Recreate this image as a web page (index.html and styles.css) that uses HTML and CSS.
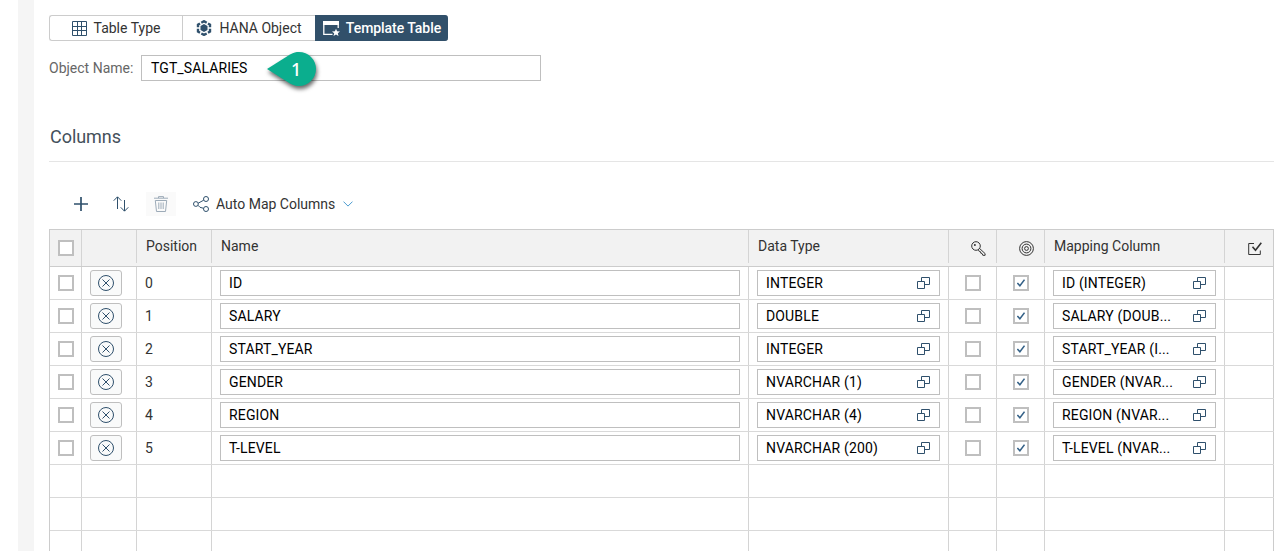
FILE: index.html
```html
<!DOCTYPE html>
<html lang="en">
<head>
<meta charset="utf-8">
<title>Template Table</title>
<link rel="stylesheet" href="styles.css">
</head>
<body>
<svg class="sprite" aria-hidden="true">
  <symbol id="i-grid" viewBox="0 0 15 15"><path d="M.5.5h14v14H.5zM5.500 .5v14M9.500 .5v14M.5 5.500h14M.5 9.500h14"/></symbol>
  <symbol id="i-hana" viewBox="0 0 16 16"><path class="solid" d="M8 4l3.500 2v4L8 12 4.500 10V6z"/><path stroke-width="2.400" d="M5.300 2.700L8 1.200l2.700 1.500M12 3.500l2 1.200v2.500M14 8.800v2.700l-2 1.200M10.700 13.500L8 14.900l-2.700-1.400M4 12.700l-2-1.200V8.800M2 7.200V4.700l2-1.200"/></symbol>
  <symbol id="i-template" viewBox="0 0 17 15"><path d="M9.500 13.300H.8V1h14.400v6"/><path class="solid" d="M0 0h16v4H0zM13 7.800l1.100 2.500 2.900.2-2.200 1.700.7 2.800-2.500-1.500-2.500 1.500.7-2.800L9 10.500l2.900-.2z"/></symbol>
  <symbol id="i-plus" viewBox="0 0 14 14"><path stroke-width="1.700" d="M7 0v14M0 7h14"/></symbol>
  <symbol id="i-sort" viewBox="0 0 16 16"><path d="M4.500 13V1M.7 4.700L4.500.8l3.800 3.900M11.500 4v11M7.700 11.300l3.800 3.900 3.800-3.900"/></symbol>
  <symbol id="i-trash" viewBox="0 0 14 16"><path d="M0 2.200h14M4.500 2V.6h5V2M1.300 4.500h11.400L11.500 15.500h-9zM4.800 6.500v6.500M7 6.500v6.500M9.200 6.500v6.500"/></symbol>
  <symbol id="i-share" viewBox="0 0 16 16"><circle cx="2.900" cy="8" r="2.400"/><circle cx="13" cy="3" r="2.500"/><circle cx="13" cy="13" r="2.500"/><path d="M5.200 7.200l5.500-3M5 9.300l2 2 3.500 1"/></symbol>
  <symbol id="i-chevron" viewBox="0 0 10 6"><path d="M.5.600L5 5.100 9.500.600"/></symbol>
  <symbol id="i-decline" viewBox="0 0 16 16"><circle cx="8" cy="8" r="7.500"/><path d="M4.500 4.500l7 7M11.500 4.500l-7 7"/></symbol>
  <symbol id="i-value" viewBox="0 0 13 12"><path d="M.5 4.500h7v7h-7zM4.500 4.500v-4h8v7h-5"/></symbol>
  <symbol id="i-check" viewBox="0 0 8 8"><path stroke-width="1.500" d="M.4 4l2.500 2.800L7.500.7"/></symbol>
  <symbol id="i-key" viewBox="0 0 15 15"><circle cx="5" cy="5" r="4.300"/><circle class="solid" cx="3.900" cy="3.900" r="1"/><path d="M8.500 7.400l5.600 5.200v1.700h-2.300L11 12.400l-1.200-.2-.3-1.500-1.200-.2-1-1.800"/></symbol>
  <symbol id="i-target" viewBox="0 0 15 15"><circle cx="7.500" cy="7.500" r="6.900"/><circle cx="7.500" cy="7.500" r="4.400"/><circle cx="7.500" cy="7.500" r="1.900"/></symbol>
  <symbol id="i-accept" viewBox="0 0 14 13"><path d="M6 1.500H.7v11h11.600V8.500"/><path stroke-width="1.600" d="M4.500 4.700l3 3.500L13.300.8"/></symbol>
</svg>

<div class="app">
  <div class="gutter"></div>
  <main class="panel">
    <div class="segments">
      <button class="segment"><svg class="icon s15"><use href="#i-grid"/></svg><span>Table Type</span></button>
      <button class="segment"><svg class="icon s16"><use href="#i-hana"/></svg><span>HANA Object</span></button>
      <button class="segment selected"><svg class="icon template-icon"><use href="#i-template"/></svg><span>Template Table</span></button>
    </div>

    <div class="object-row">
      <label class="object-label">Object Name:</label>
      <div class="object-input"><span>TGT_SALARIES</span>
        <div class="callout">
          <svg class="callout-shape" viewBox="0 0 49 34"><path d="M0 17L23 2.500C27 .5 29 0 32 0a17 17 0 0 1 0 34c-3 0-5-.5-9-2.500z"/></svg>
          <span class="callout-number">1</span>
        </div>
      </div>
    </div>

    <h2 class="section-title">Columns</h2>

    <div class="toolbar">
      <button class="tool"><svg class="icon s14"><use href="#i-plus"/></svg></button>
      <button class="tool"><svg class="icon s16"><use href="#i-sort"/></svg></button>
      <button class="tool disabled"><svg class="icon trash-icon"><use href="#i-trash"/></svg></button>
      <button class="automap"><svg class="icon s16"><use href="#i-share"/></svg><span>Auto Map Columns</span><svg class="icon chevron"><use href="#i-chevron"/></svg></button>
    </div>

    <div class="grid" id="grid">
      <div class="row header">
        <div class="cell"><span class="checkbox"></span></div>
        <div class="cell"></div>
        <div class="cell"><span>Position</span></div>
        <div class="cell"><span>Name</span></div>
        <div class="cell"><span>Data Type</span></div>
        <div class="cell end"><svg class="icon s15"><use href="#i-key"/></svg></div>
        <div class="cell end"><svg class="icon s15"><use href="#i-target"/></svg></div>
        <div class="cell"><span>Mapping Column</span></div>
        <div class="cell end"><svg class="icon accept-icon"><use href="#i-accept"/></svg></div>
      </div>
    </div>
  </main>
</div>
<script src="grid.js"></script>
</body>
</html>
```

FILE: styles.css
```css
* { box-sizing: border-box; }
body {
  margin: 0;
  height: 551px;
  overflow: hidden;
  background: #fff;
  color: #333;
  font: 14px/16px Roboto, "Noto Sans", sans-serif;
  letter-spacing: 0;
}
button { font: inherit; letter-spacing: inherit; color: inherit; margin: 0; padding: 0; }
.sprite { position: absolute; width: 0; height: 0; }
.icon { display: block; flex: none; fill: none; stroke: currentColor; color: #2f506c; stroke-width: 1; overflow: visible; }
.solid { fill: currentColor; stroke: none; }
.s14 { width: 14px; height: 14px; }
.s15 { width: 15px; height: 15px; }
.s16 { width: 16px; height: 16px; }

.app { display: flex; height: 551px; padding-left: 18px; }
.gutter { width: 16px; flex: none; background: #f5f5f5; }
.panel { width: 1240px; padding: 15px 0 0 15px; }

.segments { display: flex; width: 399px; height: 26px; }
.segment {
  display: flex; align-items: center; justify-content: center;
  width: 133px; height: 26px; gap: 7px;
  border: 1px solid #ccc; border-right: 0; background: #fff;
  white-space: nowrap;
}
.segment:first-child { border-radius: 3px 0 0 3px; }
.segment.selected { gap: 6px; background: #31506a; border-color: #31506a; color: #fff; font-weight: 500; letter-spacing: -.05px; border-radius: 0 3px 3px 0; }
.segment.selected .icon { color: #fff; }
.template-icon { width: 17px; height: 15px; stroke-width: 1.300; }

.object-row { display: flex; align-items: center; height: 26px; margin-top: 14px; }
.object-label { width: 92px; color: #666; white-space: nowrap; }
.object-input {
  position: relative; display: flex; align-items: center;
  width: 400px; height: 26px; padding-left: 9px;
  border: 1px solid #bfbfbf; color: #000; letter-spacing: .1px;
}
.callout { position: absolute; left: 125px; top: -4px; width: 49px; height: 34px; display: flex; align-items: center; padding-left: 24px; }
.callout-shape { position: absolute; inset: 0; width: 49px; height: 34px; fill: #0bae8e; overflow: visible; filter: drop-shadow(1px 3px 2px rgba(0,0,0,.6)); }
.callout-number { position: relative; color: #fff; font: 500 18px/20px "Noto Sans", sans-serif; }

.section-title {
  height: 81px; margin: 0; padding-top: 45px;
  border-bottom: 1px solid #e5e5e5;
  font-size: 18px; line-height: 22px; font-weight: 400; letter-spacing: -.05px; color: #44505b;
  text-indent: 1px;
}

.toolbar { display: flex; align-items: center; height: 67px; padding: 17px 0 0 17px; gap: 10px; }
.tool { display: flex; align-items: center; justify-content: center; width: 30px; height: 24px; border: 0; background: none; }
.tool.disabled { background: #fafafa; }
.tool.disabled .icon { color: #9dabb8; }
.trash-icon { width: 14px; height: 16px; }
.automap { display: flex; align-items: center; gap: 7px; height: 24px; margin-left: 7px; border: 0; background: none; white-space: nowrap; }
.chevron { width: 10px; height: 6px; margin-left: 1px; }
.automap .chevron { color: #4b9bd0; }

.grid { width: 1225px; border: solid #ccc; border-width: 1px 0 0 1px; }
.row { display: grid; grid-template-columns: 32px 55px 75px 537px 200px 48px 48px 180px 49px; height: 33px; border-bottom: 1px solid #d9d9d9; }
.cell { display: flex; align-items: center; min-width: 0; padding: 0 8px; border-right: 1px solid #d4d4d4; white-space: nowrap; }
.cell:last-child { border-color: #ccc; }
.check-cell { padding: 0 0 0 16px; }
.header { height: 37px; background: #f2f2f2; border-color: #ccc; }
.header .cell { height: 33px; padding-left: 9px; padding-bottom: 1px; }
.header .cell:first-child { height: 36px; padding: 0 0 0 8px; }
.header .end { justify-content: flex-end; padding: 3px 10px 0 0; }
.header .cell:last-child { height: 36px; padding: 0 11px 0 0; }
.header .icon { color: #333; }
.accept-icon { width: 14px; height: 13px; }
.checkbox { display: flex; align-items: center; justify-content: center; width: 16px; height: 16px; flex: none; border: 2px solid #bfbfbf; background: #fff; }
.checkbox .icon { width: 8px; height: 8px; color: #346187; }
.decline { display: flex; align-items: center; justify-content: center; width: 32px; height: 26px; border: 1px solid #bfbfbf; border-radius: 3px; background: #f9fafa; }
.field { display: flex; align-items: center; justify-content: space-between; width: 100%; height: 26px; padding: 0 9px 0 8px; border: 1px solid #bfbfbf; background: #fff; color: #000; letter-spacing: .15px; }
.value-icon { width: 13px; height: 12px; }
```

FILE: grid.js
```js
const columns = [
  ["ID", "INTEGER", "ID (INTEGER)"],
  ["SALARY", "DOUBLE", "SALARY (DOUB..."],
  ["START_YEAR", "INTEGER", "START_YEAR (I..."],
  ["GENDER", "NVARCHAR (1)", "GENDER (NVAR..."],
  ["REGION", "NVARCHAR (4)", "REGION (NVAR..."],
  ["T-LEVEL", "NVARCHAR (200)", "T-LEVEL (NVAR..."]
];
const valueHelp = '<svg class="icon value-icon"><use href="#i-value"/></svg>';
const cell = (content, extra = "") => `<div class="cell ${extra}">${content}</div>`;
const field = (text, icon = "") => `<div class="field"><span>${text}</span>${icon}</div>`;

const rows = columns.map(([name, type, mapping], i) => `<div class="row">${[
  cell('<span class="checkbox"></span>'),
  cell('<button class="decline"><svg class="icon s16"><use href="#i-decline"/></svg></button>'),
  cell(`<span>${i}</span>`),
  cell(field(name)),
  cell(field(type, valueHelp)),
  cell('<span class="checkbox"></span>', "check-cell"),
  cell('<span class="checkbox"><svg class="icon"><use href="#i-check"/></svg></span>', "check-cell"),
  cell(field(mapping, valueHelp)),
  cell("")
].join("")}</div>`);
const emptyRow = `<div class="row">${cell("").repeat(9)}</div>`;
document.getElementById("grid").insertAdjacentHTML("beforeend", rows.join("") + emptyRow.repeat(3));
```
